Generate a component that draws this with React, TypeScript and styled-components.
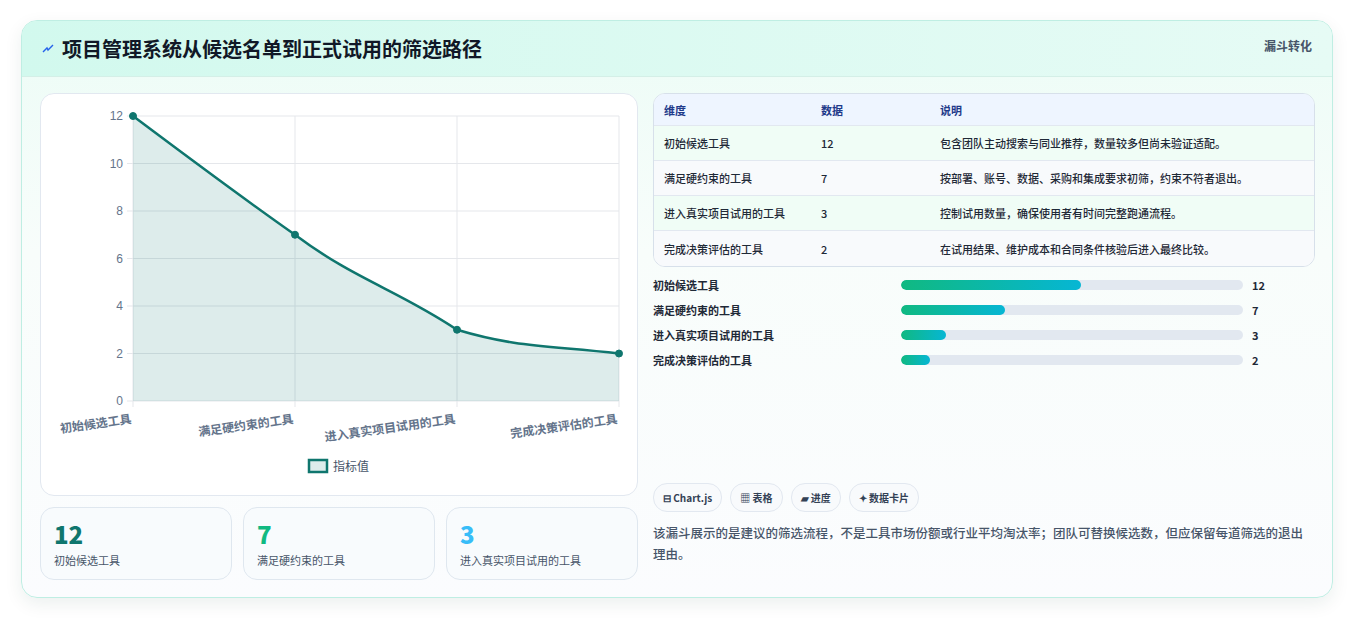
import React from "react";
import styled, { createGlobalStyle } from "styled-components";

const G = createGlobalStyle`
  body { margin:0; background:#fff; font-family: "Noto Sans CJK SC", "Noto Sans", sans-serif; }
`;
const Page = styled.div`padding:20px 20px 20px 21px;`;
const Card = styled.div`
  width:1312px; height:578px; box-sizing:border-box; border:1px solid #bfeee3; border-radius:16px;
  background:linear-gradient(180deg,#ecfcf6 0%,#f8fdfb 40%,#fbfcfe 100%); overflow:hidden;
  box-shadow:0 6px 18px rgba(15,60,50,0.08); display:flex; flex-direction:column;
`;
const Header = styled.div`
  height:55px; display:flex; align-items:center; justify-content:space-between; padding:0 20px;
  background:linear-gradient(90deg,#d2f9ee,#e6fbf5); border-bottom:1px solid #d4efe7;
`;
const Title = styled.h1`margin:0; font-size:20px; font-weight:700; color:#111827; display:flex; align-items:center; gap:8px;`;
const Tag = styled.span`font-size:12px; font-weight:700; color:#475569; align-self:flex-start; margin-top:16px;`;
const Body = styled.div`display:grid; grid-template-columns:598px 662px; gap:15px; padding:16px 18px 0 18px;`;
const Left = styled.div`display:flex; flex-direction:column; gap:11px;`;
const ChartBox = styled.div`height:403px; box-sizing:border-box; background:#fff; border:1px solid #e2e8f0; border-radius:14px;`;
const Stats = styled.div`display:grid; grid-template-columns:repeat(3,1fr); gap:11px;`;
const Stat = styled.div`height:73px; box-sizing:border-box; border:1px solid #dfe7ef; border-radius:14px; background:#f8fbfd; padding:11px 13px;`;
const Num = styled.div<{c:string}>`font-size:24px; font-weight:800; color:${p=>p.c}; line-height:30px;`;
const SLabel = styled.div`font-size:11px; color:#475569; margin-top:3px;`;
const Right = styled.div`display:flex; flex-direction:column;`;
const Table = styled.div`border:1px solid #d7e0ea; border-radius:12px; overflow:hidden; background:#fff;`;
const Row = styled.div<{bg:string; head?:boolean}>`
  display:grid; grid-template-columns:157px 119px 1fr; height:${p=>p.head?32:35}px; box-sizing:border-box; align-items:center;
  padding-left:10px; background:${p=>p.bg}; font-size:11px; color:${p=>p.head?"#1e3a8a":"#1f2937"};
  font-weight:${p=>p.head?700:500}; border-bottom:1px solid #e2e8f0; &:last-child{border-bottom:none;}
`;
const Bars = styled.div`display:flex; flex-direction:column; gap:9px; margin-top:10px;`;
const BarRow = styled.div`display:grid; grid-template-columns:248px 342px 1fr; align-items:center; height:16px; font-size:11px; font-weight:600; color:#1f2937;`;
const Track = styled.div`height:10px; border-radius:5px; background:#e2e8f0; overflow:hidden;`;
const Fill = styled.div`height:100%; border-radius:5px; background:linear-gradient(90deg,#10b981,#06b6d4);`;
const BVal = styled.span`padding-left:9px; font-weight:700;`;
const Chips = styled.div`display:flex; gap:8px; margin-top:auto;`;
const Chip = styled.span`font-size:10px; font-weight:700; color:#334155; border:1px solid #e2e8f0; background:#f8fafc; border-radius:14px; padding:6px 9px;`;
const Note = styled.p`margin:10px 0 16px; font-size:12.5px; color:#475569; line-height:21px; font-weight:500;`;

const rows = [
  ["初始候选工具","12","包含团队主动搜索与同业推荐，数量较多但尚未验证适配。"],
  ["满足硬约束的工具","7","按部署、账号、数据、采购和集成要求初筛，约束不符者退出。"],
  ["进入真实项目试用的工具","3","控制试用数量，确保使用者有时间完整跑通流程。"],
  ["完成决策评估的工具","2","在试用结果、维护成本和合同条件核验后进入最终比较。"],
];
const widths = [180,104,45,29];

function Chart(){
  const x0=92, x1=578, y0=22, y1=307;
  const X=(i:number)=>x0+(x1-x0)*i/3; const Y=(v:number)=>y1-(y1-y0)*v/12;
  const vals=[12,7,3,2]; const pts=vals.map((v,i)=>[X(i),Y(v)]);
  const line=`M${pts[0][0]},${pts[0][1]} C${pts[0][0]+60},${pts[0][1]+45} ${pts[1][0]-50},${pts[1][1]-35} ${pts[1][0]},${pts[1][1]} C${pts[1][0]+60},${pts[1][1]+45} ${pts[2][0]-60},${pts[2][1]-40} ${pts[2][0]},${pts[2][1]} C${pts[2][0]+60},${pts[2][1]+18} ${pts[3][0]-70},${pts[3][1]-8} ${pts[3][0]},${pts[3][1]}`;
  const labels=["初始候选工具","满足硬约束的工具","进入真实项目试用的工具","完成决策评估的工具"];
  return (
    <svg width="596" height="401" style={{display:"block"}}>
      {[0,2,4,6,8,10,12].map(v=>(<g key={v}>
        <line x1={x0-6} x2={x1} y1={Y(v)} y2={Y(v)} stroke="#e5e7eb"/>
        <text x={x0-10} y={Y(v)+4} textAnchor="end" fontSize="12" fill="#64748b" fontFamily="Liberation Sans">{v}</text>
      </g>))}
      {[0,1,2,3].map(i=><line key={i} x1={X(i)} x2={X(i)} y1={y0} y2={y1+6} stroke="#e5e7eb"/>)}
      <path d={`${line} L${x1},${y1} L${x0},${y1} Z`} fill="rgba(15,118,110,0.14)"/>
      <path d={line} fill="none" stroke="#0f766e" strokeWidth="2.5"/>
      {pts.map((p,i)=><circle key={i} cx={p[0]} cy={p[1]} r="3.5" fill="#0f766e" stroke="#0f766e"/>)}
      {labels.map((l,i)=><text key={i} transform={`translate(${X(i)-1},${y1+22}) rotate(-8)`} textAnchor="end" fontSize="12" fontWeight="600" fill="#64748b">{l}</text>)}
      <rect x="268" y="366" width="18" height="12" fill="rgba(15,118,110,0.14)" stroke="#0f766e" strokeWidth="2.5"/>
      <text x="292" y="377" fontSize="12" fill="#475569">指标值</text>
    </svg>
  );
}

export default function App(){
  return (<Page><G/><Card>
    <Header>
      <Title><svg width="12" height="10" viewBox="0 0 12 10"><path d="M1 8 L5 4 L6 6 L11 1" stroke="#2563eb" strokeWidth="1.4" fill="none"/></svg>项目管理系统从候选名单到正式试用的筛选路径</Title>
      <Tag>漏斗转化</Tag>
    </Header>
    <Body>
      <Left>
        <ChartBox><Chart/></ChartBox>
        <Stats>
          <Stat><Num c="#0f766e">12</Num><SLabel>初始候选工具</SLabel></Stat>
          <Stat><Num c="#10b981">7</Num><SLabel>满足硬约束的工具</SLabel></Stat>
          <Stat><Num c="#38bdf8">3</Num><SLabel>进入真实项目试用的工具</SLabel></Stat>
        </Stats>
      </Left>
      <Right>
        <Table>
          <Row head bg="#eef5ff"><span>维度</span><span>数据</span><span>说明</span></Row>
          {rows.map((r,i)=><Row key={i} bg={i%2===0?"#f0fdf6":"#f8fafc"}><span>{r[0]}</span><span>{r[1]}</span><span>{r[2]}</span></Row>)}
        </Table>
        <Bars>
          {rows.map((r,i)=><BarRow key={i}><span>{r[0]}</span><Track><Fill style={{width:widths[i]}}/></Track><BVal>{r[1]}</BVal></BarRow>)}
        </Bars>
        <Chips><Chip>⊟ Chart.js</Chip><Chip>▦ 表格</Chip><Chip>▰ 进度</Chip><Chip>✦ 数据卡片</Chip></Chips>
        <Note>该漏斗展示的是建议的筛选流程，不是工具市场份额或行业平均淘汰率；团队可替换候选数，但应保留每道筛选的退出理由。</Note>
      </Right>
    </Body>
  </Card></Page>);
}
